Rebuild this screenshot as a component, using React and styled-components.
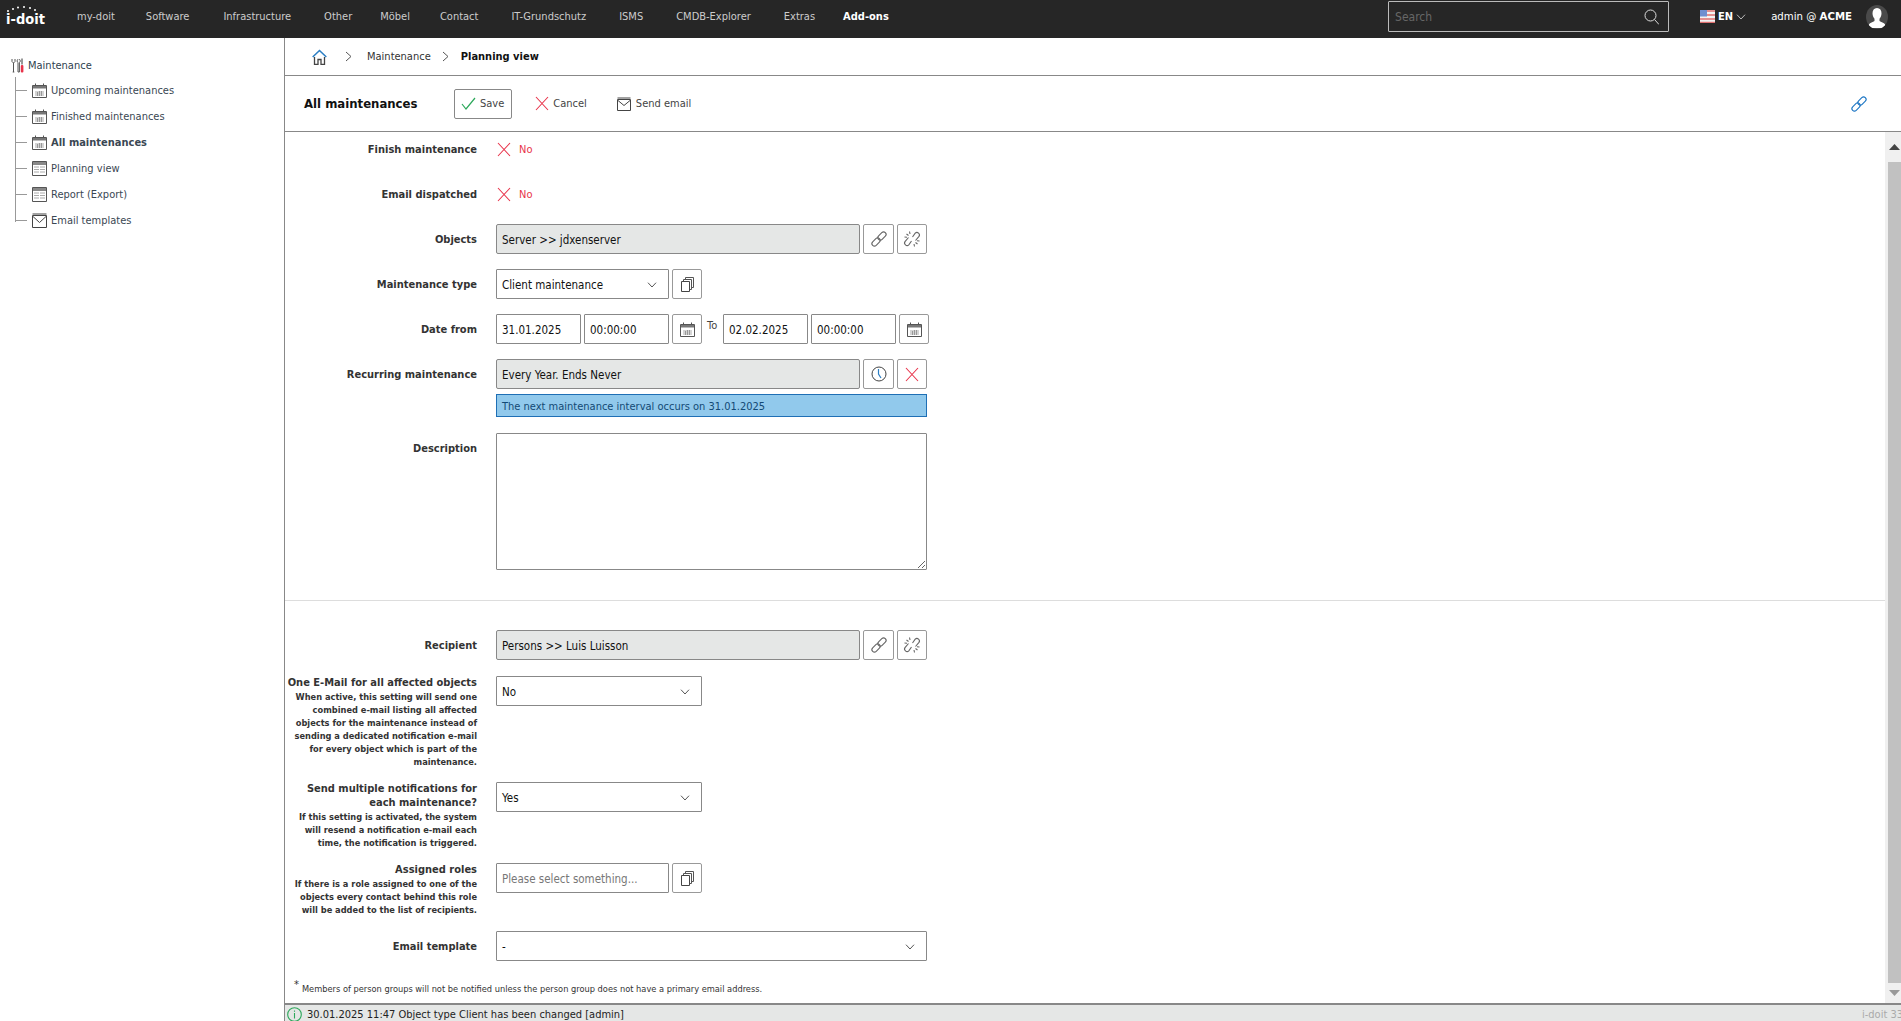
import React from 'react';
import styled, { createGlobalStyle } from 'styled-components';

const GlobalStyle = createGlobalStyle`
  html, body { margin: 0; padding: 0; height: 100%; overflow: hidden; }
  body { font-family: 'DejaVu Sans', 'Liberation Sans', sans-serif; font-stretch: condensed; font-size: 11px; color: #333; background: #fff; }
  input, textarea { font-stretch: condensed; }
  * { box-sizing: border-box; }
`;

const Page = styled.div`
  display: flex;
  flex-direction: column;
  width: 100%;
  height: 100vh;
  overflow: hidden;
`;

const TopBar = styled.header`
  display: flex;
  align-items: center;
  flex: 0 0 38px;
  height: 38px;
  background: #262626;
  color: #ccc;
  padding: 0 0 5px 6px;
`;

const Logo = styled.div`
  position: relative;
  width: 37px;
  margin-right: 34px;
  color: #fff;
  font-weight: 700;
  font-size: 14.5px;
  line-height: 16px;
  padding-top: 4px;
  white-space: nowrap;
  svg { position: absolute; left: 0; top: -2px; }
`;

const Nav = styled.nav`
  display: flex;
  align-items: center;
  flex: 1;
`;

const NavItem = styled.span`
  margin-right: ${p => p.$mr || 33}px;
  color: ${p => (p.$active ? '#fff' : '#ccc')};
  font-weight: ${p => (p.$active ? 700 : 400)};
  white-space: nowrap;
`;

const SearchBox = styled.div`
  display: flex;
  align-items: center;
  justify-content: space-between;
  width: 281px;
  height: 31px;
  padding: 0 9px 0 4px;
  border: 1px solid #bbb;
  border-radius: 1px;
`;

const SearchInput = styled.input`
  flex: 1;
  min-width: 0;
  border: 0;
  outline: 0;
  background: none;
  color: #ccc;
  font: inherit;
  font-size: 12px;
  &::placeholder { color: #666; opacity: 1; }
`;

const Lang = styled.div`
  display: flex;
  align-items: center;
  gap: 3px;
  margin-left: 31px;
  color: #fff;
  font-size: 11px;
  font-weight: 600;
`;

const UserName = styled.div`
  margin-left: 25px;
  color: #fff;
  font-size: 11.3px;
  white-space: nowrap;
  b { font-weight: 700; }
`;

const Avatar = styled.div`
  width: 22px;
  height: 24px;
  margin: 0 13px 0 14px;
  border-radius: 50%;
  background: #4a4a4a;
  overflow: hidden;
`;

const Body = styled.div`
  display: flex;
  flex: 1;
  min-height: 0;
`;

const Sidebar = styled.aside`
  flex: 0 0 285px;
  border-right: 1px solid #888;
  padding: 19px 0 0 11px;
`;

const TreeRoot = styled.div`
  display: flex;
  align-items: center;
  gap: 4px;
  height: 16px;
  color: #2f3f4f;
`;

const TreeList = styled.ul`
  position: relative;
  list-style: none;
  margin: 4px 0 0;
  padding: 0 0 0 21px;
  &::before {
    content: '';
    position: absolute;
    left: 4px;
    top: 0;
    height: 145px;
    width: 1px;
    background: #999;
  }
`;

const TreeItem = styled.li`
  position: relative;
  display: flex;
  align-items: center;
  gap: 4px;
  height: 26px;
  padding-top: 1px;
  color: #3a4753;
  font-weight: ${p => (p.$active ? 700 : 400)};
  &::before {
    content: '';
    position: absolute;
    left: -17px;
    top: 13px;
    width: 12px;
    height: 1px;
    background: #999;
  }
`;

const Main = styled.main`
  display: flex;
  flex-direction: column;
  flex: 1;
  min-width: 0;
`;

const Breadcrumb = styled.div`
  display: flex;
  align-items: center;
  flex: 0 0 38px;
  padding-left: 27px;
  border-bottom: 1px solid #888;
  color: #222;
`;

const Crumb = styled.span`
  font-weight: ${p => (p.$current ? 700 : 400)};
  color: ${p => (p.$current ? '#111' : '#333')};
`;

const Sep = styled.span`
  display: flex;
  margin: ${p => p.$m};
`;

const Toolbar = styled.div`
  display: flex;
  align-items: center;
  flex: 0 0 56px;
  padding: 0 33px 0 19px;
  border-bottom: 1px solid #888;
`;

const Title = styled.h1`
  margin: 0 37px 0 0;
  width: 113px;
  font-size: 13px;
  font-weight: 700;
  color: #111;
  white-space: nowrap;
`;

const ToolButton = styled.div`
  display: flex;
  align-items: center;
  gap: 4px;
  height: 30px;
  padding: 0 ${p => (p.$boxed ? '7px 0 6px' : '0')};
  margin-right: ${p => p.$mr || 0}px;
  border: ${p => (p.$boxed ? '1px solid #888' : '0')};
  border-radius: 2px;
  color: #444;
`;

const Spacer = styled.div`
  flex: 1;
`;

const ContentWrap = styled.div`
  display: flex;
  flex: 1;
  min-height: 0;
`;

const Content = styled.div`
  flex: 1;
  min-width: 0;
  padding-top: 2px;
  overflow: hidden;
`;

const Row = styled.div`
  display: flex;
  align-items: flex-start;
  margin-bottom: ${p => (p.$mb === undefined ? 15 : p.$mb)}px;
`;

const LabelCol = styled.div`
  flex: 0 0 192px;
  height: 30px;
  margin-right: 19px;
  text-align: right;
  color: #333;
  font-weight: 700;
  line-height: 31px;
`;

const StackLabel = styled(LabelCol)`
  height: auto;
  line-height: 14px;
`;

const Hint = styled.div`
  font-size: 9.2px;
  font-weight: 700;
  line-height: 13px;
`;

const Value = styled.div`
  display: flex;
  align-items: center;
  gap: 3px;
`;

const Column = styled.div`
  display: flex;
  flex-direction: column;
  gap: 5px;
`;

const NoText = styled.div`
  display: flex;
  align-items: center;
  gap: 8px;
  height: 30px;
  padding-left: 1px;
  color: #e8334a;
`;

const ReadOnly = styled.div`
  display: flex;
  align-items: center;
  width: 364px;
  height: 30px;
  padding: 1px 0 0 5px;
  background: #e5e7e6;
  border: 1px solid #888;
  border-radius: 2px;
  color: #111;
  font-size: 11.5px;
`;

const Input = styled.input`
  width: ${p => p.$w}px;
  height: 30px;
  padding: 1px 5px 0;
  border: 1px solid #888;
  border-radius: 1px;
  outline: 0;
  font: inherit;
  font-size: 11.5px;
  color: #111;
  &::placeholder { color: #777; opacity: 1; }
`;

const Select = styled.div`
  display: flex;
  align-items: center;
  justify-content: space-between;
  width: ${p => p.$w}px;
  height: 30px;
  padding: 1px 11px 0 5px;
  border: 1px solid #888;
  border-radius: 1px;
  background: #fff;
  color: #111;
  font-size: 11.5px;
`;

const IconButton = styled.div`
  display: flex;
  align-items: center;
  justify-content: center;
  width: ${p => p.$w || 31}px;
  height: 30px;
  border: 1px solid #999;
  border-radius: 2px;
  background: #fff;
`;

const ToText = styled.span`
  width: 13px;
  margin: -7px 0 0 2px;
  color: #444;
`;

const InfoBar = styled.div`
  display: flex;
  align-items: center;
  width: 431px;
  height: 23px;
  padding: 1px 0 0 5px;
  background: #91c9ec;
  border: 1px solid #1e6fb5;
  color: #134a75;
`;

const TextArea = styled.textarea`
  display: block;
  width: 431px;
  height: 137px;
  border: 1px solid #888;
  border-radius: 1px;
  outline: 0;
`;

const Divider = styled.hr`
  margin: 30px 0 29px;
  border: 0;
  border-top: 1px solid #ddd;
`;

const Footnote = styled.div`
  margin-top: 21px;
  padding-left: 9px;
  font-size: 9.2px;
  line-height: 14px;
  color: #333;
  sup { font-size: 11px; line-height: 0; margin-right: 3px; }
`;

const ScrollRail = styled.div`
  display: flex;
  flex-direction: column;
  align-items: flex-end;
  flex: 0 0 16px;
  background: #f0f0f0;
`;

const ArrowCell = styled.div`
  display: flex;
  align-items: center;
  justify-content: center;
  width: 14px;
  height: ${p => p.$h}px;
`;

const Thumb = styled.div`
  flex: 1;
  width: 13px;
  background: #c1c1c1;
`;

const StatusBar = styled.footer`
  display: flex;
  align-items: center;
  justify-content: space-between;
  flex: 0 0 18px;
  padding-left: 2px;
  background: #e5e7e6;
  border-top: 2px solid #888;
  color: #222;
  overflow: hidden;
  white-space: nowrap;
`;

const StatusText = styled.div`
  display: flex;
  align-items: center;
  gap: 5px;
  padding-top: 3px;
  font-size: 11px;
`;

const Version = styled.div`
  flex: 0 0 39px;
  padding-top: 3px;
  overflow: hidden;
  color: #aaa;
`;

const Glyph = ({ w = 16, h = 16, vb, children, sw = 1, color = '#555' }) => (
  <svg width={w} height={h} viewBox={vb || `0 0 ${w} ${h}`} fill="none" stroke={color} strokeWidth={sw} style={{ flex: 'none' }}>
    {children}
  </svg>
);

const Cross = ({ color = '#e8334a' }) => (
  <Glyph w={14} h={15} color={color} sw={1.1}><path d="M1 1l12 13M13 1L1 14" /></Glyph>
);
const Tick = () => (
  <Glyph w={15} h={13} color="#2da85b" sw={1.2}><path d="M1 7l4 5L14 1" /></Glyph>
);
const Chevron = ({ color = '#555', w = 10 }) => (
  <Glyph w={w} h={6} vb="0 0 10 6" color={color}><path d="M1 .7l4 4.3 4-4.3" /></Glyph>
);
const CrumbArrow = () => (
  <Glyph w={7} h={11} color="#555"><path d="M1 1l5 4.5L1 10" /></Glyph>
);
const Envelope = () => (
  <Glyph w={16} h={14} color="#444"><path d="M1.5 2.5h13v11h-13zM1.5 1h13M2 3.5l6 5 6-5" /></Glyph>
);
const Chain = ({ color = '#666' }) => (
  <Glyph w={18} h={18} color={color} sw={1.1}>
    <rect x="7.200" y="3.500" width="9.500" height="5" rx="2.500" transform="rotate(-45 12 6)" />
    <rect x="1.300" y="9.500" width="9.500" height="5" rx="2.500" transform="rotate(-45 6 12)" />
  </Glyph>
);
const BrokenChain = () => (
  <Glyph w={18} h={18} color="#666" sw={1.1}>
    <path d="M9.500 7l2.700-3.800a2.500 2.500 0 0 1 3.800 3.200l-3.500 4.100" />
    <path d="M8.500 11l-2.700 3.800a2.500 2.500 0 0 1-3.800-3.200l3.500-4.100" />
    <path d="M3.500 4l2 1.500M6.500 1.500l.5 2.500M1.500 7l2.500.2M14.500 14l-2-1.500M11.500 16.500l-.5-2.500M16.500 11l-2.500-.2" />
  </Glyph>
);
const Pages = () => (
  <Glyph w={13} h={15} color="#555">
    <path d="M.5 4.500h8v10h-8z" stroke="#444" />
    <path d="M2.500 4V2.500h8V12.500H9M4.500 2V.5h8V10.500h-2" />
  </Glyph>
);
const Calendar = ({ s = 15 }) => (
  <Glyph w={s} h={s} vb="0 0 15 15" color="#555">
    <path d="M.5 2.500h14v12H.5z" />
    <path d="M1 3h13v2.500H1z" fill="#777" stroke="none" />
    <path d="M3.500.5v2M11.500.5v2" />
    <path d="M3 8h9v5H3z" fill="#d4d4d4" stroke="none" />
    <path d="M5.500 13V9M7.500 13V8M9.500 13V8" stroke="#999" />
  </Glyph>
);
const TableIcon = () => (
  <Glyph w={15} h={15} color="#555">
    <path d="M.5.5h14v14H.5z" />
    <path d="M1 1h13v3H1z" fill="#888" stroke="none" />
    <path d="M2 6h5M2 8.500h5M2 11h5M8 6h5M8 8.500h5M8 11h5" stroke="#aaa" />
  </Glyph>
);
const MailIcon = () => (
  <Glyph w={15} h={15} color="#444"><path d="M.5 2.500h14v12H.5zM.5 1h14M1 3.500l6.500 6 6.500-6" /></Glyph>
);
const Tools = () => (
  <Glyph w={13} h={15} color="#555">
    <path d="M1 1v2.500l1.500 1.500 1.500-1.500V1M2.500 5v9M1.700 14h1.600" />
    <path d="M7 1.200C5.700 2.500 6 4 7 4.500V14h1.400V4.500c1-.5 1.300-2 0-3.300" />
    <path d="M11 .5v6" stroke="#333" />
    <rect x="9.800" y="7" width="2.600" height="7.500" rx="1" fill="#e8334a" stroke="none" />
  </Glyph>
);
const HomeIcon = () => (
  <Glyph w={15} h={16} color="#444" sw={1.3}>
    <path d="M.7 8L7.500 1.500l6.800 6.500" stroke="#2c7fc4" strokeWidth="1.600" />
    <path d="M2.500 8v7.500h3.500v-5h3v5h3.500V8" />
  </Glyph>
);
const ClockIcon = () => (
  <Glyph w={16} h={16} color="#444">
    <circle cx="8" cy="8" r="7" />
    <path d="M7.500 3v5l2.500 4" stroke="#2c7fc4" strokeWidth="1.200" />
  </Glyph>
);
const Magnifier = () => (
  <Glyph w={15} h={16} color="#ddd"><circle cx="6.500" cy="6.500" r="5.500" /><path d="M10.500 10.500l4.500 5" /></Glyph>
);
const InfoIcon = () => (
  <Glyph w={15} h={15} color="#2da85b" sw={1.1}>
    <circle cx="7.500" cy="7.500" r="6.800" />
    <path d="M7.500 6v5.500M7.500 3.500v1.300" />
  </Glyph>
);
const Flag = () => (
  <svg width="15" height="13" viewBox="0 0 15 13">
    <rect width="15" height="13" fill="#f3f3f3" />
    <path d="M0 1h15M0 5h15M0 9h15M0 12.500h15" stroke="#e07070" strokeWidth="1.500" />
    <rect width="7" height="6.500" fill="#6f8fd0" />
  </svg>
);
const Person = () => (
  <svg width="22" height="24" viewBox="0 0 22 24">
    <path d="M11 3c3 0 4.500 2.200 4.500 5.300 0 2.500-1 4.200-2 5.400v2.300c1.500 1 4.500 1.700 5.500 3.200 V23H3v-3.800c1-1.500 4-2.200 5.500-3.200v-2.300c-1-1.200-2-2.900-2-5.400C6.500 5.200 8 3 11 3z" fill="#fff" />
  </svg>
);
const LogoDots = () => (
  <svg width="37" height="8" viewBox="0 0 37 8" fill="#fff">
    <circle cx="2" cy="6" r="1" /><circle cx="7" cy="4" r="1" /><circle cx="12" cy="2.500" r="1" />
    <circle cx="18" cy="2" r="1" /><circle cx="24" cy="3" r="1" /><circle cx="29" cy="5" r="1" />
  </svg>
);

const navItems = [
  { text: 'my-doit', mr: 31 },
  { text: 'Software', mr: 34 },
  { text: 'Infrastructure' },
  { text: 'Other', mr: 28 },
  { text: 'Möbel', mr: 30 },
  { text: 'Contact' },
  { text: 'IT-Grundschutz' },
  { text: 'ISMS' },
  { text: 'CMDB-Explorer' },
  { text: 'Extras', mr: 28 },
];

const treeItems = [
  { text: 'Upcoming maintenances', icon: <Calendar /> },
  { text: 'Finished maintenances', icon: <Calendar /> },
  { text: 'All maintenances', icon: <Calendar />, active: true },
  { text: 'Planning view', icon: <TableIcon /> },
  { text: 'Report (Export)', icon: <TableIcon /> },
  { text: 'Email templates', icon: <MailIcon /> },
];

const LinkedField = ({ text }) => (
  <Value>
    <ReadOnly>{text}</ReadOnly>
    <IconButton><Chain /></IconButton>
    <IconButton $w={30}><BrokenChain /></IconButton>
  </Value>
);

export default function App() {
  return (
    <Page>
      <GlobalStyle />
      <TopBar>
        <Logo><LogoDots />i-doit</Logo>
        <Nav>
          {navItems.map(n => <NavItem key={n.text} $mr={n.mr}>{n.text}</NavItem>)}
          <NavItem $active>Add-ons</NavItem>
        </Nav>
        <SearchBox>
          <SearchInput placeholder="Search" />
          <Magnifier />
        </SearchBox>
        <Lang><Flag />EN<Chevron color="#bbb" /></Lang>
        <UserName>admin @ <b>ACME</b></UserName>
        <Avatar><Person /></Avatar>
      </TopBar>
      <Body>
        <Sidebar>
          <TreeRoot><Tools />Maintenance</TreeRoot>
          <TreeList>
            {treeItems.map(t => (
              <TreeItem key={t.text} $active={t.active}>{t.icon}{t.text}</TreeItem>
            ))}
          </TreeList>
        </Sidebar>
        <Main>
          <Breadcrumb>
            <HomeIcon />
            <Sep $m="0 15px 0 18px"><CrumbArrow /></Sep>
            <Crumb>Maintenance</Crumb>
            <Sep $m="0 12px 0 11px"><CrumbArrow /></Sep>
            <Crumb $current>Planning view</Crumb>
          </Breadcrumb>
          <Toolbar>
            <Title>All maintenances</Title>
            <ToolButton $boxed $mr={23}><Tick />Save</ToolButton>
            <ToolButton $mr={29}><Cross />Cancel</ToolButton>
            <ToolButton><Envelope />Send email</ToolButton>
            <Spacer />
            <Chain color="#1b75c4" />
          </Toolbar>
          <ContentWrap>
            <Content>
              <Row>
                <LabelCol>Finish maintenance</LabelCol>
                <NoText><Cross />No</NoText>
              </Row>
              <Row>
                <LabelCol>Email dispatched</LabelCol>
                <NoText><Cross />No</NoText>
              </Row>
              <Row>
                <LabelCol>Objects</LabelCol>
                <LinkedField text="Server >> jdxenserver" />
              </Row>
              <Row>
                <LabelCol>Maintenance type</LabelCol>
                <Value>
                  <Select $w={173}>Client maintenance<Chevron /></Select>
                  <IconButton $w={30}><Pages /></IconButton>
                </Value>
              </Row>
              <Row>
                <LabelCol>Date from</LabelCol>
                <Value>
                  <Input $w={85} defaultValue="31.01.2025" />
                  <Input $w={85} defaultValue="00:00:00" />
                  <IconButton $w={30}><Calendar /></IconButton>
                  <ToText>To</ToText>
                  <Input $w={85} defaultValue="02.02.2025" />
                  <Input $w={85} defaultValue="00:00:00" />
                  <IconButton $w={30}><Calendar /></IconButton>
                </Value>
              </Row>
              <Row $mb={16}>
                <LabelCol>Recurring maintenance</LabelCol>
                <Column>
                  <Value>
                    <ReadOnly>Every Year. Ends Never</ReadOnly>
                    <IconButton><ClockIcon /></IconButton>
                    <IconButton $w={30}><Cross /></IconButton>
                  </Value>
                  <InfoBar>The next maintenance interval occurs on 31.01.2025</InfoBar>
                </Column>
              </Row>
              <Row $mb={0}>
                <LabelCol>Description</LabelCol>
                <TextArea />
              </Row>
              <Divider />
              <Row $mb={16}>
                <LabelCol>Recipient</LabelCol>
                <LinkedField text="Persons >> Luis Luisson" />
              </Row>
              <Row $mb={14}>
                <StackLabel>
                  One E-Mail for all affected objects
                  <Hint>When active, this setting will send one combined e-mail listing all affected objects for the maintenance instead of sending a dedicated notification e-mail for every object which is part of the maintenance.</Hint>
                </StackLabel>
                <Select $w={206}>No<Chevron /></Select>
              </Row>
              <Row $mb={14}>
                <StackLabel>
                  Send multiple notifications for each maintenance?
                  <Hint>If this setting is activated, the system will resend a notification e-mail each time, the notification is triggered.</Hint>
                </StackLabel>
                <Select $w={206}>Yes<Chevron /></Select>
              </Row>
              <Row $mb={15}>
                <StackLabel>
                  Assigned roles
                  <Hint>If there is a role assigned to one of the objects every contact behind this role will be added to the list of recipients.</Hint>
                </StackLabel>
                <Value>
                  <Input $w={173} placeholder="Please select something..." />
                  <IconButton $w={30}><Pages /></IconButton>
                </Value>
              </Row>
              <Row $mb={0}>
                <LabelCol>Email template</LabelCol>
                <Select $w={431}>-<Chevron /></Select>
              </Row>
              <Footnote><sup>*</sup>Members of person groups will not be notified unless the person group does not have a primary email address.</Footnote>
            </Content>
            <ScrollRail>
              <ArrowCell $h={30}>
                <svg width="11" height="6" viewBox="0 0 11 6"><path d="M5.500 0L11 6H0z" fill="#444" /></svg>
              </ArrowCell>
              <Thumb />
              <ArrowCell $h={20}>
                <svg width="11" height="6" viewBox="0 0 11 6"><path d="M0 0h11L5.500 6z" fill="#999" /></svg>
              </ArrowCell>
            </ScrollRail>
          </ContentWrap>
          <StatusBar>
            <StatusText><InfoIcon />30.01.2025 11:47 Object type Client has been changed [admin]</StatusText>
            <Version>i-doit 33</Version>
          </StatusBar>
        </Main>
      </Body>
    </Page>
  );
}
